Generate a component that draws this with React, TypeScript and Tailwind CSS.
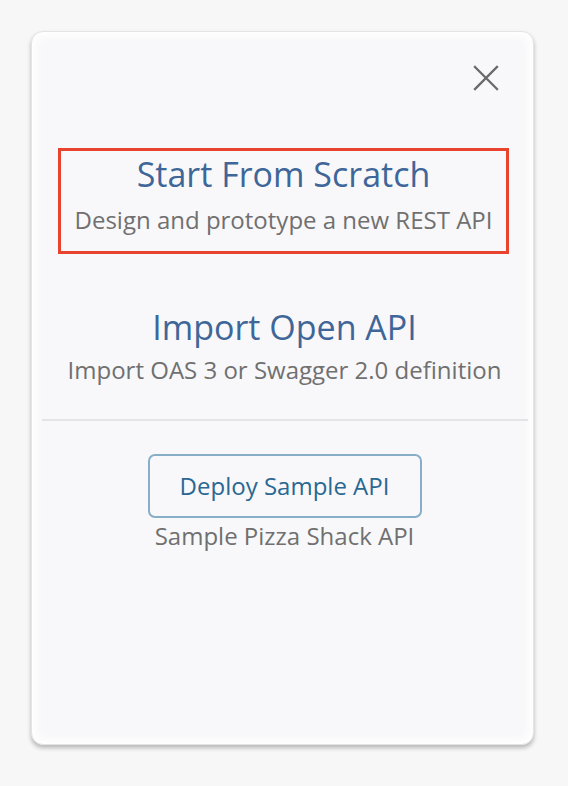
import React from 'react';

const font = { fontFamily: '"Open Sans", "Noto Sans", sans-serif' };

function CloseIcon() {
  return (
    <svg width="26" height="26" viewBox="0 0 26 26" fill="none" stroke="#6a6a6a" strokeWidth="2.3" strokeLinecap="square">
      <path d="M2 2 L24 24 M24 2 L2 24" />
    </svg>
  );
}

export default function App() {
  return (
    <div className="min-h-screen bg-[#f7f7f7] pt-[31px] pl-[31px]" style={font}>
      <div className="w-[503px] h-[714px] rounded-[12px] bg-[#f8f8fa] border border-[#e4e4e4] shadow-[inset_0_0_10px_4px_#ffffff,0_3px_4px_rgba(0,0,0,0.25)] flex flex-col">
        <div className="flex justify-end pt-[33px] pr-[34px]">
          <button className="w-[26px] h-[26px]">
            <CloseIcon />
          </button>
        </div>
        {/* Start from scratch */}
        <div className="ml-[26px] mt-[57px] w-[451px] h-[106px] border-[3px] border-[#e8432d] flex flex-col items-center pt-[2px]">
          <div className="text-[34px] leading-[42px] text-[#3e6699]">Start From Scratch</div>
          <div className="mt-[9px] text-[24px] leading-[32px] text-[#707070]">Design and prototype a new REST API</div>
        </div>
        {/* Import */}
        <div className="flex flex-col items-center mt-[52px] pl-[4px]">
          <div className="text-[34px] leading-[42px] text-[#3e6699]">Import Open API</div>
          <div className="mt-[6px] text-[24px] leading-[32px] text-[#707070]">Import OAS 3 or Swagger 2.0 definition</div>
        </div>
        <div className="ml-[10px] mr-[5px] mt-[33px] h-[2px] bg-[#e4e4e7]" />
        {/* Sample */}
        <div className="flex flex-col items-center mt-[33px] pl-[4px]">
          <button className="w-[274px] h-[64px] rounded-[7px] border-2 border-[#86afc7] text-[24px] text-[#2a6893]">
            Deploy Sample API
          </button>
          <div className="mt-[2px] text-[24px] leading-[32px] text-[#707070]">Sample Pizza Shack API</div>
        </div>
      </div>
    </div>
  );
}
